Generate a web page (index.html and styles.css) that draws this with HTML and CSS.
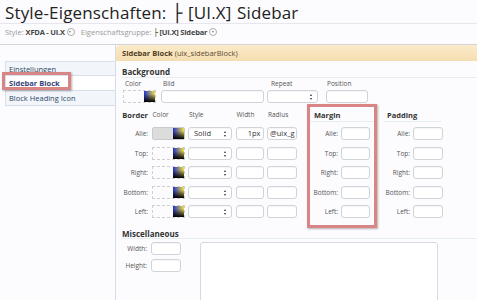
FILE: index.html
```html
<!DOCTYPE html>
<html lang="de">
  <head>
    <meta charset="UTF-8" />
    <title>Style-Eigenschaften</title>
    <link rel="stylesheet" href="styles.css">
  </head>
  <body>
    <h1 class="title">Style-Eigenschaften: ├ [UI.X] Sidebar</h1>
    <div class="crumbs">
      <span class="muted">Style:</span> <b>XFDA - UI.X</b><span class="drop"></span>
      <span class="muted gap">Eigenschaftsgruppe:</span> <b>├ [UI.X] Sidebar</b><span class="drop"></span>
    </div>

    <div class="layout">
      <ul class="tabs">
        <li>Einstellungen</li>
        <li class="active"><span class="mark">Sidebar Block</span></li>
        <li>Block Heading Icon</li>
      </ul>

      <div class="panel">
        <div class="panel-head"><b>Sidebar Block</b> (uix_sidebarBlock)</div>
        <div class="panel-body">

          <h3 class="sec-title">Background</h3>
          <div class="bg-row">
            <div class="field f-color">
              <label>Color</label>
              <div class="swatch"><span class="picker"></span></div>
            </div>
            <div class="field f-bild">
              <label>Bild</label>
              <div class="input"></div>
            </div>
            <div class="field f-repeat">
              <label>Repeat</label>
              <div class="input select"><span class="arrows"></span></div>
            </div>
            <div class="field f-pos">
              <label>Position</label>
              <div class="input"></div>
            </div>
          </div>

          <div class="box-row">
            <div class="border-grid">
              <div class="lbl head">Border</div>
              <div class="col-head">Color</div>
              <div class="col-head">Style</div>
              <div class="col-head">Width</div>
              <div class="col-head">Radius</div>

              <div class="lbl">Alle:</div>
              <div class="swatch filled"><span class="picker"></span></div>
              <div class="input select"><span class="val">Solid</span><span class="arrows"></span></div>
              <div class="input right"><span class="val">1px</span></div>
              <div class="input"><span class="val">@uix_g</span></div>

              <div class="lbl">Top:</div>
              <div class="swatch"><span class="picker"></span></div>
              <div class="input select"><span class="arrows"></span></div>
              <div class="input"></div>
              <div class="input"></div>

              <div class="lbl">Right:</div>
              <div class="swatch"><span class="picker"></span></div>
              <div class="input select"><span class="arrows"></span></div>
              <div class="input"></div>
              <div class="input"></div>

              <div class="lbl">Bottom:</div>
              <div class="swatch"><span class="picker"></span></div>
              <div class="input select"><span class="arrows"></span></div>
              <div class="input"></div>
              <div class="input"></div>

              <div class="lbl">Left:</div>
              <div class="swatch"><span class="picker"></span></div>
              <div class="input select"><span class="arrows"></span></div>
              <div class="input"></div>
              <div class="input"></div>
            </div>

            <div class="side-box margin-box">
              <div class="side-title">Margin</div>
              <div class="side-grid">
                <div class="lbl">Alle:</div><div class="input"></div>
                <div class="lbl">Top:</div><div class="input"></div>
                <div class="lbl">Right:</div><div class="input"></div>
                <div class="lbl">Bottom:</div><div class="input"></div>
                <div class="lbl">Left:</div><div class="input"></div>
              </div>
            </div>

            <div class="side-box padding-box">
              <div class="side-title">Padding</div>
              <div class="side-grid">
                <div class="lbl">Alle:</div><div class="input"></div>
                <div class="lbl">Top:</div><div class="input"></div>
                <div class="lbl">Right:</div><div class="input"></div>
                <div class="lbl">Bottom:</div><div class="input"></div>
                <div class="lbl">Left:</div><div class="input"></div>
              </div>
            </div>
          </div>

          <h3 class="sec-title misc-title">Miscellaneous</h3>
          <div class="misc-row">
            <div class="misc-grid">
              <div class="lbl">Width:</div><div class="input"></div>
              <div class="lbl">Height:</div><div class="input"></div>
            </div>
            <div class="textarea"></div>
          </div>

        </div>
      </div>
    </div>
  </body>
</html>
```

FILE: styles.css
```css
body {
  margin: 0;
  background-color: #fcfcfe;
  color: #333;
  font-family: "Open Sans", "DejaVu Sans", sans-serif;
  overflow: hidden;
}

/* titre */
.title {
  margin: 0;
  height: 24px;
  padding-left: 5px;
  font-size: 17px;
  font-weight: normal;
  line-height: 26px;
  letter-spacing: 0.15px;
  word-spacing: 1px;
  color: #222;
  border-bottom: 1px solid #e6e6ec;
  box-sizing: border-box;
  white-space: nowrap;
}
.crumbs {
  height: 21px;
  padding-left: 5px;
  font-size: 7.5px;
  line-height: 17px;
  color: #444;
  border-bottom: 1px solid #d4d4d8;
  box-sizing: border-box;
  white-space: nowrap;
}
.crumbs b {
  letter-spacing: -0.2px;
}
.crumbs .muted {
  color: #9a9a9a;
}
.crumbs .gap {
  margin-left: 4px;
}
.drop {
  display: inline-block;
  width: 6px;
  height: 6px;
  margin-left: 2px;
  vertical-align: -1px;
  border: 1px solid #aaa;
  border-radius: 50%;
  background: #fff;
  position: relative;
}
.drop::after {
  content: "";
  position: absolute;
  left: 1.5px;
  top: 2px;
  border-left: 1.5px solid transparent;
  border-right: 1.5px solid transparent;
  border-top: 2px solid #777;
}

/* mise en page */
.layout {
  display: flex;
}
.tabs {
  width: 110px;
  margin: 16px 0 0 5px;
  padding: 0;
  list-style: none;
  font-size: 7.5px;
  color: #2c4766;
  flex-shrink: 0;
}
.tabs li {
  height: 15px;
  line-height: 15px;
  padding-left: 3px;
  background-color: #f2f5fa;
  border: 1px solid #d6dfea;
  border-right: none;
  box-sizing: border-box;
}
.tabs li + li {
  border-top: none;
}
.tabs li.active {
  background-color: #fff;
}
.mark {
  position: relative;
  font-weight: bold;
  color: #34427a;
}
.mark::after {
  content: "";
  position: absolute;
  left: -7px;
  top: -6px;
  width: 63px;
  height: 12px;
  border: 3px solid #d98586;
  box-shadow: 1px 1px 2px rgba(0, 0, 0, 0.3);
}

.panel {
  flex: 1;
  border-left: 1px solid #d6dde6;
  min-height: 260px;
}
.panel-head {
  height: 16px;
  line-height: 16px;
  padding-left: 6px;
  font-size: 7.5px;
  color: #5c4b33;
  background: linear-gradient(#fbebca, #f5ddb0);
  border-top-left-radius: 4px;
  white-space: nowrap;
}
.panel-head b {
  color: #4f3d26;
}
.panel-body {
  padding-left: 5px;
}

/* sections */
.sec-title {
  margin: 0;
  padding: 5px 0 0 1px;
  height: 17px;
  line-height: 12px;
  font-size: 8px;
  font-weight: bold;
  color: #333;
  border-bottom: 1px solid #e6eef2;
  box-sizing: border-box;
}
.bg-row {
  display: flex;
  margin-top: 1px;
}
.field {
  display: flex;
  flex-direction: column;
}
.field label {
  height: 11px;
  line-height: 10px;
  font-size: 6.5px;
  color: #555;
  padding-left: 2px;
}
.f-color { margin-left: 2px; width: 33px; }
.f-bild { margin-left: 5px; width: 103px; }
.f-repeat { margin-left: 3px; width: 51px; }
.f-pos { margin-left: 8px; width: 42px; }
.f-repeat label { padding-left: 4px; }
.f-pos label { padding-left: 1px; }
.field .input,
.field .swatch {
  height: 13px;
}

/* champs */
.input {
  position: relative;
  background-color: #fff;
  border: 1px solid #cfd4d9;
  border-radius: 3px;
  box-shadow: inset 0 1px 1px rgba(0, 0, 0, 0.04);
  box-sizing: border-box;
  overflow: hidden;
  font-size: 7.5px;
  line-height: 11px;
  color: #333;
  white-space: nowrap;
}
.input .val {
  padding-left: 2px;
}
.input.select .val {
  padding-left: 5px;
}
.input.right {
  text-align: right;
}
.input.right .val {
  padding-left: 0;
  padding-right: 2px;
}
.arrows {
  position: absolute;
  right: 4px;
  top: 3px;
  width: 3px;
  height: 6px;
}
.arrows::before,
.arrows::after {
  content: "";
  position: absolute;
  left: 0;
  border-left: 1.5px solid transparent;
  border-right: 1.5px solid transparent;
}
.arrows::before {
  top: 0;
  border-bottom: 2.5px solid #333;
}
.arrows::after {
  bottom: 0;
  border-top: 2.5px solid #333;
}
.swatch {
  position: relative;
  border: 1px dashed #cfcfcf;
  box-sizing: border-box;
}
.swatch.filled {
  background-color: #dcdcdc;
  border: 1px solid #cacaca;
  border-radius: 2px;
}
.picker {
  position: absolute;
  right: 0;
  top: 0;
  width: 11px;
  height: 11px;
  background:
    linear-gradient(to bottom, rgba(0, 0, 0, 0) 25%, #000 100%),
    linear-gradient(to right, #2232c8, #f2e244);
}

/* border / margin / padding */
.box-row {
  display: flex;
  align-items: flex-start;
  margin-top: 1px;
}
.border-grid {
  display: grid;
  grid-template-columns: 27px 33px 44px 28px 30px;
  grid-template-rows: 11.5px;
  grid-auto-rows: 13px;
  column-gap: 3.5px;
  row-gap: 6.5px;
  padding-top: 5px;
}
.lbl {
  text-align: right;
  font-size: 6.5px;
  line-height: 13px;
  color: #555;
  white-space: nowrap;
}
.lbl.head {
  font-size: 7.5px;
  font-weight: bold;
  color: #333;
  line-height: 12px;
}
.col-head {
  padding-left: 1px;
  font-size: 6.5px;
  line-height: 12px;
  color: #555;
}
.side-box {
  box-sizing: border-box;
  border: 3px solid transparent;
  padding-bottom: 7px;
}
.margin-box {
  width: 70px;
  margin-left: 10px;
  border-color: #d98586;
  box-shadow: 1px 1px 2px rgba(0, 0, 0, 0.3);
}
.padding-box {
  width: 63px;
  margin-left: 4px;
}
.side-title {
  margin-top: 2px;
  height: 12px;
  line-height: 12px;
  padding-left: 4px;
  font-size: 7.5px;
  font-weight: bold;
  color: #333;
  border-bottom: 1px solid #e6eef2;
}
.padding-box .side-title {
  padding-left: 3px;
}
.side-grid {
  display: grid;
  grid-template-columns: 28px 29px;
  grid-auto-rows: 13px;
  column-gap: 3px;
  row-gap: 6.5px;
  margin-top: 5px;
}
.padding-box .side-grid {
  grid-template-columns: 26px 29.5px;
}

/* divers */
.misc-title {
  padding-top: 0;
  height: 11px;
  line-height: 11px;
}
.misc-row {
  display: flex;
  margin-top: 3px;
}
.misc-grid {
  display: grid;
  grid-template-columns: 26px 30px;
  grid-auto-rows: 13px;
  column-gap: 3.5px;
  row-gap: 4px;
}
.textarea {
  width: 238px;
  height: 90px;
  margin-left: 19.5px;
  background-color: #fff;
  border: 1px solid #d6d9dd;
  border-radius: 3px;
  box-sizing: border-box;
}
```
